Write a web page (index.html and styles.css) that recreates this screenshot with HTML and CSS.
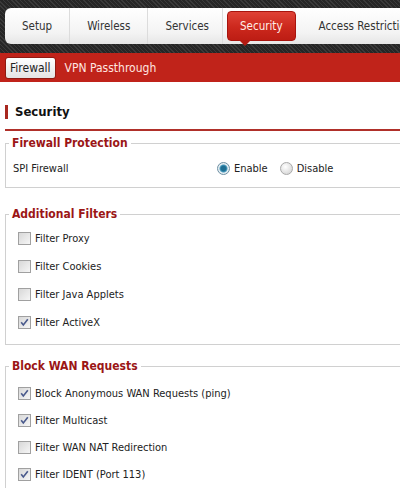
FILE: index.html
```html
<!DOCTYPE html>
<html>
<head>
<meta charset="utf-8">
<link rel="stylesheet" href="styles.css">
</head>
<body>
<div class="page">
  <header class="top">
    <nav class="tabs">
      <span class="tab">Setup</span>
      <span class="tab">Wireless</span>
      <span class="tab">Services</span>
      <span class="tab active">Security</span>
      <span class="tab last">Access Restrictions</span>
    </nav>
  </header>
  <div class="subbar">
    <span class="subbtn">Firewall</span>
    <span class="sublink">VPN Passthrough</span>
  </div>
  <main class="content">
    <h2 class="heading">Security</h2>

    <fieldset class="group group-fw">
      <legend>Firewall Protection</legend>
      <div class="row row-fw">
        <span class="label">SPI Firewall</span>
        <span class="radios">
          <span class="radio on"></span><span class="rtext">Enable</span>
          <span class="radio"></span><span class="rtext">Disable</span>
        </span>
      </div>
    </fieldset>

    <fieldset class="group group-add">
      <legend>Additional Filters</legend>
      <div class="row"><span class="cb"></span>Filter Proxy</div>
      <div class="row"><span class="cb"></span>Filter Cookies</div>
      <div class="row"><span class="cb"></span>Filter Java Applets</div>
      <div class="row"><span class="cb on"><svg viewBox="0 0 13 13" width="13" height="13"><path d="M3.2 6.3 L5.3 9 L9.8 3.2" fill="none" stroke="#4a5a8c" stroke-width="1.6"/></svg></span>Filter ActiveX</div>
    </fieldset>

    <fieldset class="group group-wan">
      <legend>Block WAN Requests</legend>
      <div class="row"><span class="cb on"><svg viewBox="0 0 13 13" width="13" height="13"><path d="M3.2 6.3 L5.3 9 L9.8 3.2" fill="none" stroke="#4a5a8c" stroke-width="1.6"/></svg></span>Block Anonymous WAN Requests (ping)</div>
      <div class="row"><span class="cb on"><svg viewBox="0 0 13 13" width="13" height="13"><path d="M3.2 6.3 L5.3 9 L9.8 3.2" fill="none" stroke="#4a5a8c" stroke-width="1.6"/></svg></span>Filter Multicast</div>
      <div class="row"><span class="cb"></span>Filter WAN NAT Redirection</div>
      <div class="row"><span class="cb on"><svg viewBox="0 0 13 13" width="13" height="13"><path d="M3.2 6.3 L5.3 9 L9.8 3.2" fill="none" stroke="#4a5a8c" stroke-width="1.6"/></svg></span>Filter IDENT (Port 113)</div>
    </fieldset>
  </main>
</div>
</body>
</html>
```
FILE: styles.css
```css
html, body {
  margin: 0;
  padding: 0;
  background: #fff;
  overflow: hidden;
}
body {
  font-family: "DejaVu Sans Condensed", "DejaVu Sans", Tahoma, sans-serif;
  font-size: 11px;
  color: #222;
}
.page {
  width: 440px;
  height: 488px;
  overflow: hidden;
}
.top {
  height: 53px;
  box-sizing: border-box;
  padding: 8px 0 0 5px;
  background: repeating-linear-gradient(45deg, #3a3a3a 0 1px, #262626 1px 3px);
}
.tabs {
  display: flex;
  align-items: center;
  height: 36px;
  background: linear-gradient(#ffffff, #f3f3f3 70%, #e6e6e6);
  border-radius: 6px 0 0 6px;
  font-size: 11.5px;
  color: #333;
}
.tab {
  position: relative;
  padding: 0 17px;
  height: 36px;
  line-height: 36px;
  border-right: 1px solid #dcdcdc;
  white-space: nowrap;
}
.tab:nth-child(3) { padding-right: 13px; }
.tab.last { border-right: none; }
.tab.active {
  height: 28px;
  line-height: 28px;
  margin: 0 6px 0 4px;
  padding: 0 12px;
  color: #fff0e8;
  border: 1px solid #a8140e;
  border-radius: 4px;
  background: linear-gradient(#df4236, #cc281d 55%, #bd1d14);
}
.tab.active::after {
  content: "";
  position: absolute;
  left: 11px;
  bottom: -6px;
  border-left: 6px solid transparent;
  border-right: 6px solid transparent;
  border-top: 6px solid #b51a12;
}
.subbar {
  height: 29px;
  display: flex;
  align-items: center;
  padding-left: 5px;
  background: #c0231a;
  font-size: 12px;
}
.subbtn {
  display: inline-block;
  height: 20px;
  line-height: 20px;
  padding: 0 4px;
  border: 1px solid #8f1a12;
  border-radius: 3px;
  background: linear-gradient(#ffffff, #e4e4e4);
  color: #222;
}
.sublink {
  margin-left: 9px;
  color: #ffe6e0;
}
.content {
  padding: 22px 0 0 5px;
}
.heading {
  margin: 0 0 4px 0;
  font-size: 13px;
  font-weight: bold;
  color: #111;
  padding: 0 0 10px 0;
  border-bottom: 2px solid #b0302a;
  display: flex;
  align-items: center;
  gap: 7px;
}
.heading::before {
  content: "";
  width: 3px;
  height: 14px;
  background: #a8281f;
}
.group {
  margin: 0 0 18px 0;
  padding: 2px 8px 8px 7px;
  border: 1px solid #d0d0d0;
  border-right: none;
}
.group-fw {
  padding-top: 4px;
  padding-bottom: 6px;
}
.group-add {
  margin-bottom: 13px;
}
.group-wan {
  padding-top: 6px;
}
.group legend {
  padding: 0 3px;
  margin-left: -4px;
  font-weight: bold;
  font-size: 12px;
  color: #9b1616;
  line-height: 16px;
}
.row {
  display: flex;
  align-items: center;
  height: 28px;
}
.group-wan .row { height: 27px; }
.row-fw {
  height: 26px;
}
.label {
  width: 204px;
}
.radios {
  display: flex;
  align-items: center;
}
.radio {
  width: 11px;
  height: 11px;
  border-radius: 50%;
  border: 1px solid #a9a9a9;
  background: radial-gradient(circle at 40% 35%, #ffffff, #dcdcdc 70%);
  margin-right: 4px;
}
.radio.on {
  background: radial-gradient(circle at 50% 50%, #1f6f93 0 2.5px, #4c9dc0 3.5px, #e6eef2 4.5px);
  border-color: #6d8fa3;
}
.rtext { margin-right: 12px; }
.cb {
  width: 11px;
  height: 11px;
  border: 1px solid #a0a0a0;
  background: linear-gradient(135deg, #d8d8d8, #f6f6f6);
  margin: 0 4px 0 5px;
  position: relative;
  flex: none;
}
.cb svg {
  position: absolute;
  left: -1px;
  top: -1px;
}
```
